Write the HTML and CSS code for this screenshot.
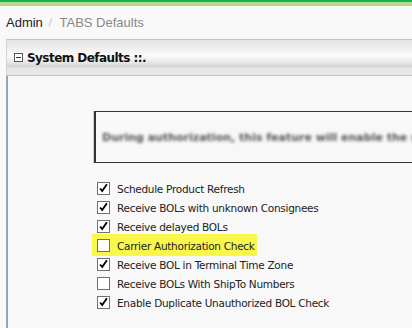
FILE: index.html
```html
<!DOCTYPE html>
<html lang="en">
<head>
    <meta charset="UTF-8">
    <title>TABS Defaults</title>
    <link rel="stylesheet" href="styles.css">
</head>
<body>
    <div class="top-bar"></div>
    <nav class="breadcrumb">
        <span class="crumb">Admin</span>
        <span class="crumb-sep">/</span>
        <span class="crumb current">TABS Defaults</span>
    </nav>
    <section class="panel">
        <header class="panel-header">
            <span class="toggle-icon"></span>
            <h2>System Defaults ::.</h2>
        </header>
        <div class="panel-body">
            <div class="notice">
                <p>During authorization, this feature will enable the system</p>
            </div>
            <ul class="options">
                <li class="option">
                    <span class="check checked"><svg viewBox="0 0 13 13"><path d="M2.5 6.5 L5 9.5 L10.5 1.5"/></svg></span>
                    <span class="label">Schedule Product Refresh</span>
                </li>
                <li class="option">
                    <span class="check checked"><svg viewBox="0 0 13 13"><path d="M2.5 6.5 L5 9.5 L10.5 1.5"/></svg></span>
                    <span class="label">Receive BOLs with unknown Consignees</span>
                </li>
                <li class="option">
                    <span class="check checked"><svg viewBox="0 0 13 13"><path d="M2.5 6.5 L5 9.5 L10.5 1.5"/></svg></span>
                    <span class="label">Receive delayed BOLs</span>
                </li>
                <li class="option highlight">
                    <span class="check"></span>
                    <span class="label">Carrier Authorization Check</span>
                </li>
                <li class="option">
                    <span class="check checked"><svg viewBox="0 0 13 13"><path d="M2.5 6.5 L5 9.5 L10.5 1.5"/></svg></span>
                    <span class="label">Receive BOL in Terminal Time Zone</span>
                </li>
                <li class="option">
                    <span class="check"></span>
                    <span class="label">Receive BOLs With ShipTo Numbers</span>
                </li>
                <li class="option">
                    <span class="check checked"><svg viewBox="0 0 13 13"><path d="M2.5 6.5 L5 9.5 L10.5 1.5"/></svg></span>
                    <span class="label">Enable Duplicate Unauthorized BOL Check</span>
                </li>
            </ul>
        </div>
    </section>
</body>
</html>
```

FILE: styles.css
```css
* {
    margin: 0;
    padding: 0;
    box-sizing: border-box;
}

body {
    background-color: #f9f9f9;
    font-family: "DejaVu Sans", Verdana, sans-serif;
    color: #222;
    overflow: hidden;
}

.top-bar {
    height: 6px;
    border-top: 2px solid #16b34f;
    background-color: #b4d88e;
}

.breadcrumb {
    height: 33px;
    padding: 9px 0 0 6px;
    font-family: "Liberation Sans", Arial, sans-serif;
    font-size: 13px;
    line-height: 16px;
    white-space: nowrap;
}

.crumb {
    color: #222;
}

.crumb-sep {
    color: #ccc;
    margin: 0 4px 0 2px;
}

.crumb.current {
    color: #888;
}

.panel {
    margin-left: 6px;
}

.panel-header {
    height: 37px;
    display: flex;
    align-items: center;
    padding-left: 7px;
    border-top: 1px solid #c4c4c4;
    border-bottom: 1px solid #c4c4c4;
    border-left: 1px solid #d4d4d4;
    background: linear-gradient(#e4e4e4 0%, #f2f2f2 30%, #fbfbfb 45%, #e6e6e6 65%, #d6d6d6 75%, #e6e6e6 82%, #e8e8e8 100%);
}

.toggle-icon {
    width: 9px;
    height: 9px;
    border: 1px solid #555;
    background-color: #fff;
    position: relative;
    margin-right: 4px;
}

.toggle-icon::after {
    content: "";
    position: absolute;
    left: 1px;
    right: 1px;
    top: 3px;
    height: 1px;
    background-color: #333;
}

.panel-header h2 {
    font-size: 12px;
    font-weight: bold;
    letter-spacing: -0.55px;
    color: #111;
    white-space: nowrap;
}

.panel-body {
    height: 260px;
    border-left: 2px solid #8ea6be;
    background-color: #f8f8f8;
    padding: 35px 0 0 86px;
}

.notice {
    height: 52px;
    border: 1px solid #333;
    border-right: none;
    border-left: 2px solid #333;
    box-shadow: -1px 0 0 #d0d0d0;
    display: flex;
    align-items: center;
    padding-left: 6px;
    overflow: hidden;
    white-space: nowrap;
}

.notice p {
    font-size: 11px;
    font-weight: bold;
    color: #555;
    filter: blur(1.4px);
}

.options {
    list-style: none;
    margin-top: 16px;
    padding-left: 3px;
}

.option {
    display: flex;
    align-items: center;
    height: 19px;
    font-size: 10.5px;
    letter-spacing: -0.28px;
    color: #222;
    white-space: nowrap;
}

.option.highlight {
    position: relative;
}

.option.highlight::before {
    content: "";
    position: absolute;
    left: -5px;
    top: -2px;
    width: 165px;
    height: 22px;
    background-color: #faf74c;
    z-index: 0;
}

.check {
    position: relative;
    z-index: 1;
    width: 13px;
    height: 13px;
    border: 1px solid #707070;
    background-color: #fff;
    margin-right: 7px;
    flex-shrink: 0;
}

.check svg {
    display: block;
    width: 11px;
    height: 11px;
    overflow: visible;
}

.check svg path {
    fill: none;
    stroke: #000;
    stroke-width: 2.2;
}

.label {
    position: relative;
    z-index: 1;
}
```
